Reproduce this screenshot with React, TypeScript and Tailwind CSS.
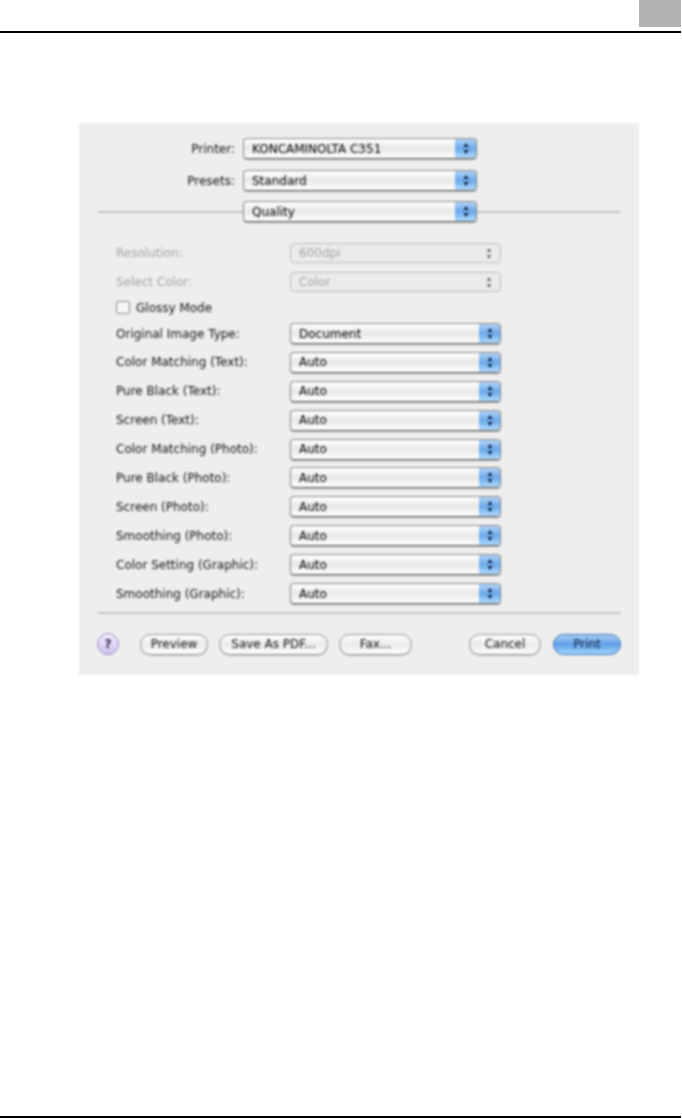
const font = { fontFamily: '"DejaVu Sans", sans-serif' };

const Stepper = ({ disabled }: { disabled?: boolean }) => (
    <svg width="6" height="13" viewBox="0 0 6 13" className="block">
        <path d="M3 1 L5.5 5 H0.5 Z" fill={disabled ? "#777777" : "#12213f"} />
        <path d="M3 12 L5.5 8 H0.5 Z" fill={disabled ? "#777777" : "#12213f"} />
    </svg>
);

const PopUp = ({ value, disabled, className }: { value: string; disabled?: boolean; className: string }) =>
    disabled ? (
        <div className={`flex h-[20px] items-center justify-between rounded-[4px] border border-[#bcbcbc] bg-[#ebebeb] pl-[8px] pr-[8px] ${className}`}>
            <span className="text-[12px] text-[#a4a4a4]">{value}</span>
            <Stepper disabled />
        </div>
    ) : (
        <div className={`flex h-[21px] items-center justify-between overflow-hidden rounded-[4px] border border-[#8a8a8a] border-b-[#5f5f5f] bg-gradient-to-b from-white via-[#e8e8e8] to-white pl-[8px] shadow-[0_1px_1px_rgba(0,0,0,0.3)] ${className}`}>
            <span className="text-[12px] text-black">{value}</span>
            <div className="flex h-full w-[21px] items-center justify-center bg-gradient-to-b from-[#b4d3f5] via-[#6aa8ec] to-[#b0dcfc]">
                <Stepper />
            </div>
        </div>
    );

const Pill = ({ label, className }: { label: string; className: string }) => (
    <div className={`flex h-[21px] items-center justify-center rounded-full border-[1.5px] border-[#949494] bg-gradient-to-b from-white via-[#eaeaea] to-white text-[12px] text-[#111111] shadow-[0_1px_1px_rgba(0,0,0,0.2)] ${className}`}>
        {label}
    </div>
);

const topRows = [
    { label: "Printer:", value: "KONCAMINOLTA C351", cls: "mt-[15px]" },
    { label: "Presets:", value: "Standard", cls: "mt-[11px]" },
];

const autoRows = [
    ["Original Image Type:", "Document"],
    ["Color Matching (Text):", "Auto"],
    ["Pure Black (Text):", "Auto"],
    ["Screen (Text):", "Auto"],
    ["Color Matching (Photo):", "Auto"],
    ["Pure Black (Photo):", "Auto"],
    ["Screen (Photo):", "Auto"],
    ["Smoothing (Photo):", "Auto"],
    ["Color Setting (Graphic):", "Auto"],
    ["Smoothing (Graphic):", "Auto"],
];

export default function App() {
    return (
        <div className="flex h-[1118px] w-[682px] flex-col bg-white" style={font}>
            {/* Page header */}
            <div className="h-[33px] w-[681px] border-b-2 border-black">
                <div className="ml-auto h-[27px] w-[42px] bg-[#b2b2b2]" />
            </div>

            {/* Print dialog */}
            <div className="ml-[79px] mt-[90px] flex h-[552px] w-[560px] flex-col bg-[#eeeeee] blur-[0.8px]">
                {topRows.map((row) => (
                    <div key={row.label} className={`flex h-[21px] items-center ${row.cls}`}>
                        <span className="w-[156px] text-right text-[12px] text-[#111111]">{row.label}</span>
                        <PopUp value={row.value} className="ml-[8px] w-[234px]" />
                    </div>
                ))}

                <div className="mt-[10px] flex items-center">
                    <div className="ml-[19px] h-[2px] w-[145px] bg-[#c0c0c0]" />
                    <PopUp value="Quality" className="w-[234px]" />
                    <div className="h-[2px] w-[143px] bg-[#c0c0c0]" />
                </div>

                <div className="ml-[37px] mt-[21px] flex flex-col gap-[9px]">
                    <div className="flex items-center">
                        <span className="w-[174px] text-[12px] text-[#a4a4a4]">Resolution:</span>
                        <PopUp value="600dpi" disabled className="w-[211px]" />
                    </div>
                    <div className="flex items-center">
                        <span className="w-[174px] text-[12px] text-[#a4a4a4]">Select Color:</span>
                        <PopUp value="Color" disabled className="w-[211px]" />
                    </div>
                </div>

                <div className="ml-[37px] mt-[9px] flex h-[13px] items-center">
                    <div className="h-[13px] w-[14px] rounded-[2px] border border-[#8a8a8a] bg-[#f6f6f6]" />
                    <span className="ml-[6px] text-[12px] text-[#111111]">Glossy Mode</span>
                </div>

                <div className="ml-[37px] mt-[9px] flex flex-col gap-[7.9px]">
                    {autoRows.map(([label, value]) => (
                        <div key={label} className="flex items-center">
                            <span className="w-[174px] whitespace-nowrap text-[12px] text-[#111111]">{label}</span>
                            <PopUp value={value} className="w-[211px]" />
                        </div>
                    ))}
                </div>

                <div className="ml-[19px] mt-[8px] h-[2px] w-[523px] bg-[#c4c4c4]" />

                <div className="mt-[19px] flex items-center">
                    <div className="ml-[18px] flex h-[22px] w-[22px] items-center justify-center rounded-full border-[1.5px] border-[#a08fc8] bg-gradient-to-b from-[#f2ecfb] to-[#cfc2ea] text-[12px] font-bold text-[#2d2450]">
                        ?
                    </div>
                    <Pill label="Preview" className="ml-[21px] w-[68px]" />
                    <Pill label="Save As PDF..." className="ml-[11px] w-[109px]" />
                    <Pill label="Fax..." className="ml-[11px] w-[73px]" />
                    <Pill label="Cancel" className="ml-[57px] w-[72px]" />
                    <div className="ml-[12px] flex h-[21px] w-[68px] items-center justify-center rounded-full border-[1.5px] border-[#3a6fb5] bg-gradient-to-b from-[#a9cdf3] via-[#5e9fe8] to-[#a5d6fb] text-[12px] text-[#16233f]">
                        Print
                    </div>
                </div>
            </div>

            {/* Page footer */}
            <div className="mt-auto h-[2px] w-[681px] bg-black" />
        </div>
    );
}
